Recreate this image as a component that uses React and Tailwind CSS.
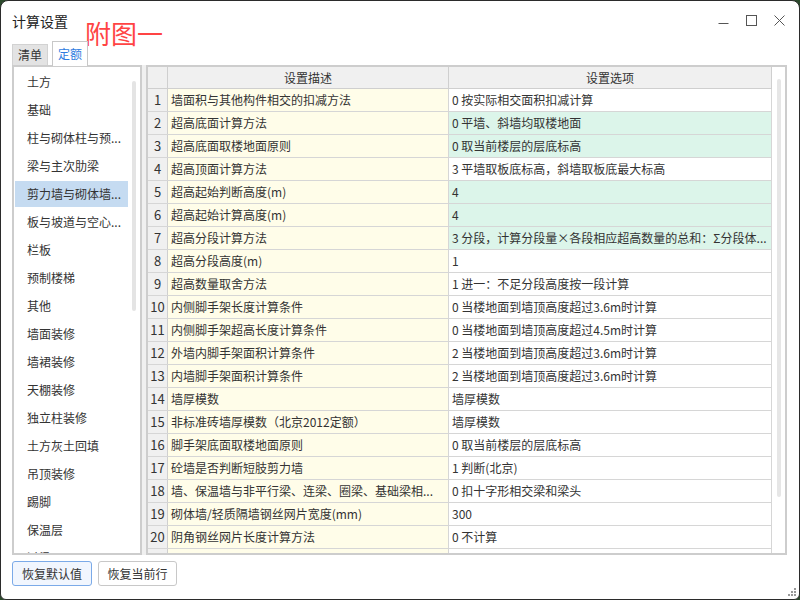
const listItems = [
  '土方',
  '基础',
  '柱与砌体柱与预...',
  '梁与主次肋梁',
  '剪力墙与砌体墙...',
  '板与坡道与空心...',
  '栏板',
  '预制楼梯',
  '其他',
  '墙面装修',
  '墙裙装修',
  '天棚装修',
  '独立柱装修',
  '土方灰土回填',
  '吊顶装修',
  '踢脚',
  '保温层',
  '过梁',
];

const rows = [
  ['墙面积与其他构件相交的扣减方法', '0 按实际相交面积扣减计算', false],
  ['超高底面计算方法', '0 平墙、斜墙均取楼地面', true],
  ['超高底面取楼地面原则', '0 取当前楼层的层底标高', true],
  ['超高顶面计算方法', '3 平墙取板底标高，斜墙取板底最大标高', false],
  ['超高起始判断高度(m)', '4', true],
  ['超高起始计算高度(m)', '4', true],
  ['超高分段计算方法', '3 分段，计算分段量×各段相应超高数量的总和：Σ分段体...', true],
  ['超高分段高度(m)', '1', false],
  ['超高数量取舍方法', '1 进一：不足分段高度按一段计算', false],
  ['内侧脚手架长度计算条件', '0 当楼地面到墙顶高度超过3.6m时计算', false],
  ['内侧脚手架超高长度计算条件', '0 当楼地面到墙顶高度超过4.5m时计算', false],
  ['外墙内脚手架面积计算条件', '2 当楼地面到墙顶高度超过3.6m时计算', false],
  ['内墙脚手架面积计算条件', '2 当楼地面到墙顶高度超过3.6m时计算', false],
  ['墙厚模数', '墙厚模数', false],
  ['非标准砖墙厚模数（北京2012定额）', '墙厚模数', false],
  ['脚手架底面取楼地面原则', '0 取当前楼层的层底标高', false],
  ['砼墙是否判断短肢剪力墙', '1 判断(北京)', false],
  ['墙、保温墙与非平行梁、连梁、圈梁、基础梁相...', '0 扣十字形相交梁和梁头', false],
  ['砌体墙/轻质隔墙钢丝网片宽度(mm)', '300', false],
  ['阴角钢丝网片长度计算方法', '0 不计算', false],
  ['', '', false],
];

const font = { fontFamily: '"Noto Sans CJK SC", "Noto Sans", sans-serif' };

function WindowControls() {
  return (
    <div className="flex items-center gap-[17px] pr-[14px] text-[#555]">
      <svg width="11" height="11" viewBox="0 0 11 11">
        <line x1="0.5" y1="8.5" x2="10.5" y2="8.5" stroke="#555" strokeWidth="1" />
      </svg>
      <svg width="11" height="11" viewBox="0 0 11 11">
        <rect x="0.5" y="0.5" width="10" height="10" fill="none" stroke="#555" strokeWidth="1" />
      </svg>
      <svg width="11" height="11" viewBox="0 0 11 11">
        <path d="M0.5 0.5 L10.5 10.5 M10.5 0.5 L0.5 10.5" stroke="#555" strokeWidth="1" />
      </svg>
    </div>
  );
}

export default function App() {
  return (
    <div className="w-[800px] h-[600px] bg-[#2c4a2c] overflow-hidden" style={font}>
      <div className="relative w-[800px] h-[600px] bg-white border border-[#2b2b2b] rounded-t-[8px] rounded-b-[6px] flex flex-col text-[#333]">
        {/* title bar */}
        <div className="h-[39px] flex items-center justify-between shrink-0">
          <div className="pl-[11px] text-[14px] text-[#222] pt-[2px]">计算设置</div>
          <WindowControls />
        </div>

        {/* red annotation */}
        <div className="absolute left-[84px] top-[15px] text-[26px] leading-[34px] text-[#ff4444]">附图一</div>

        {/* tabs */}
        <div className="h-[25px] flex items-end pl-[11px] gap-[4px] shrink-0">
          <div className="w-[36px] h-[21px] bg-[#e3e3e3] border border-b-0 border-[#d2d2d2] text-[12px] leading-[20px] text-center text-[#333]">清单</div>
          <div className="w-[36px] h-[25px] bg-white border border-b-0 border-[#c8c8c8] text-[12px] leading-[24px] text-center text-[#2e7ce0] -mb-[1px] relative z-10">定额</div>
        </div>

        {/* content */}
        <div className="flex h-[490px] pl-[11px] pr-[12px] shrink-0">
          {/* category list */}
          <div className="w-[130px] h-full border-2 border-[#cdcdcd] bg-white flex overflow-hidden">
            <div className="flex-1 min-w-0 flex flex-col gap-[2px] pt-[2px] pl-[1px]">
              {listItems.map((item, i) => (
                <div
                  key={item}
                  className={`h-[26px] shrink-0 pl-[12px] text-[12px] leading-[26px] whitespace-nowrap overflow-hidden ${i === 4 ? 'bg-[#c5dbf1]' : ''}`}
                >
                  {item}
                </div>
              ))}
            </div>
            <div className="w-[12px] shrink-0 pt-[14px] flex justify-center">
              <div className="w-[4px] h-[230px] bg-[#e4e4e4] rounded-full" />
            </div>
          </div>

          {/* splitter */}
          <div className="w-[4px] bg-[#f0f0f0] shrink-0" />

          {/* table */}
          <div className="flex-1 h-full border-2 border-[#cdcdcd] bg-white flex overflow-hidden text-[12px]">
            <div className="flex-1 flex flex-col min-w-0">
              <div className="flex h-[22px] shrink-0 border-b border-[#cfcfcf] bg-[#f0f0f0]">
                <div className="w-[20px] shrink-0 border-r border-[#cfcfcf]" />
                <div className="w-[281px] shrink-0 border-r border-[#cfcfcf] text-center leading-[21px]">设置描述</div>
                <div className="flex-1 border-r border-[#cfcfcf] text-center leading-[21px]">设置选项</div>
              </div>
              {rows.map(([desc, opt, green], i) => (
                <div key={i} className="flex h-[23px] shrink-0 border-b border-[#d6d6d6]">
                  <div className="w-[20px] shrink-0 border-r border-[#cfcfcf] bg-[#f0f0f0] text-center text-[13px] leading-[22px]">{desc ? i + 1 : ''}</div>
                  <div className="w-[281px] shrink-0 border-r border-[#d6d6d6] bg-[#fffde9] pl-[3px] leading-[22px] whitespace-nowrap overflow-hidden">{desc}</div>
                  <div className={`flex-1 min-w-0 border-r border-[#d6d6d6] pl-[3px] leading-[22px] whitespace-nowrap overflow-hidden ${green ? 'bg-[#dcf5ea]' : 'bg-white'}`}>{opt}</div>
                </div>
              ))}
            </div>
            <div className="w-[13px] shrink-0 pt-[12px] flex justify-center">
              <div className="w-[4px] h-[418px] bg-[#e6e6e6] rounded-full" />
            </div>
          </div>
        </div>

        {/* buttons */}
        <div className="flex gap-[6px] pl-[11px] pt-[6px]">
          <button className="w-[80px] h-[25px] border border-[#7baae8] bg-[#f1f6fe] rounded-[3px] text-[12px] text-[#333]">恢复默认值</button>
          <button className="w-[79px] h-[25px] border border-[#c8c8c8] bg-white rounded-[3px] text-[12px] text-[#333]">恢复当前行</button>
        </div>

        {/* resize grip */}
        <svg className="absolute right-[2px] bottom-[2px]" width="10" height="10" viewBox="0 0 10 10">
          <rect x="7" y="1" width="2" height="2" fill="#999" />
          <rect x="4" y="4" width="2" height="2" fill="#999" />
          <rect x="7" y="4" width="2" height="2" fill="#999" />
          <rect x="1" y="7" width="2" height="2" fill="#999" />
          <rect x="4" y="7" width="2" height="2" fill="#999" />
          <rect x="7" y="7" width="2" height="2" fill="#999" />
        </svg>
      </div>
    </div>
  );
}
